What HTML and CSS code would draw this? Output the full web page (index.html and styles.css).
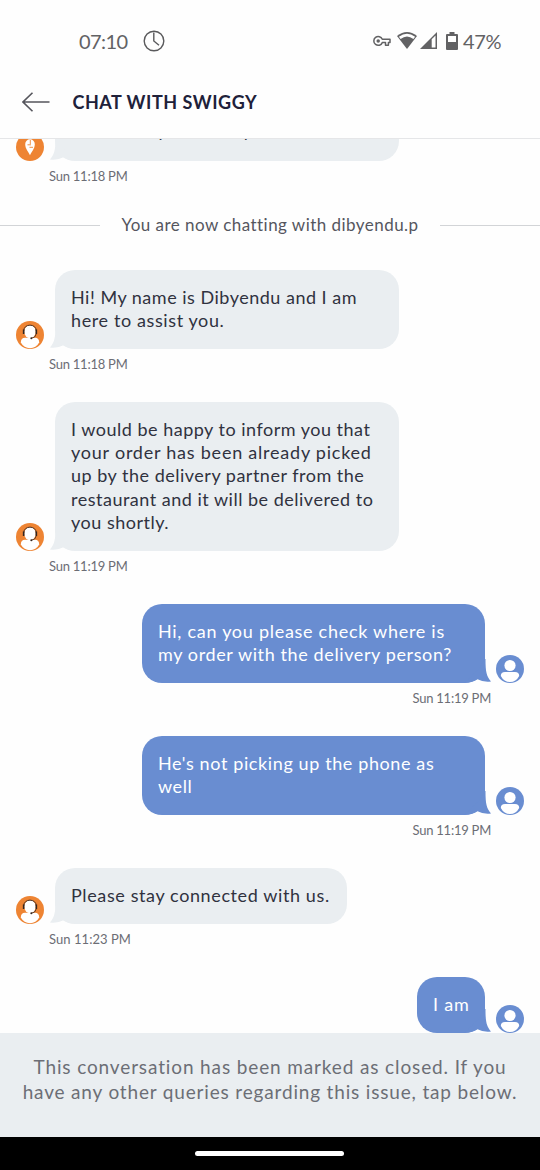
FILE: index.html
```html
<!DOCTYPE html>
<html lang="en">
<head>
<meta charset="utf-8">
<title>Chat with Swiggy</title>
<link rel="stylesheet" href="styles.css">
</head>
<body>
<svg class="defs" aria-hidden="true">
  <symbol id="agent" viewBox="0 0 28 28">
    <circle cx="14" cy="14" r="14" fill="#ee8433"/>
    <path d="M4.800 21.500Q4.800 16.800 9 16.800H19Q23.200 16.800 23.200 21.500Q20 27.200 14 27.200Q8 27.200 4.800 21.500z" fill="#fff"/>
    <ellipse cx="14" cy="10.600" rx="5.800" ry="6.600" fill="#fff"/>
    <path d="M7.700 12.500V10C7.700 2.200 20.300 2.200 20.300 10v2.500" fill="none" stroke="#4a2d1c" stroke-width="1"/>
    <path d="M7.600 8.500v4.500M20.400 8.500v4.500" stroke="#33251e" stroke-width="1.500"/>
    <path d="M20.200 13q-.7 3.800-4.700 4.200" fill="none" stroke="#4a2d1c" stroke-width=".9"/>
    <circle cx="15.300" cy="17.200" r="1" fill="#33251e"/>
  </symbol>
  <symbol id="user" viewBox="0 0 28 28">
    <circle cx="14" cy="14" r="14" fill="#698dd1"/>
    <circle cx="14" cy="10.500" r="5.600" fill="#fff"/>
    <path d="M4.800 21Q4.800 17 9 17H19Q23.200 17 23.200 21Q20 27 14 27Q8 27 4.800 21z" fill="#fff"/>
  </symbol>
  <symbol id="tail" viewBox="0 0 32 24">
    <path d="M5.500 0C5.500 13 4.500 17 0 22.500q8 .9 13.500-2.300 5 3.300 13 3.300L12 10 6.500 0z"/>
  </symbol>
</svg>
<div class="screen">
  <div class="status">
    <div class="status-left">
      <span class="clock-text">07:10</span>
      <svg width="22" height="22" viewBox="0 0 22 22" fill="none" stroke="#5a5a5c" stroke-width="1.400"><circle cx="11" cy="11" r="9.800"/><path d="M10.800 2.500V11l5.200 4.300"/></svg>
    </div>
    <div class="status-right">
      <svg class="key" width="18" height="12" viewBox="0 0 18 12" fill="none" stroke="#626264" stroke-width="1.500" stroke-linejoin="round"><path d="M9.300 4.300H17v3.300h-1.600v2.600h-2.900V7.600H9.300A4.400 4.400 0 1 1 9.300 4.300z"/><circle cx="5.200" cy="6" r="1" fill="#626264"/></svg>
      <svg class="wifi" width="20" height="17" viewBox="0 0 20 17"><path d="M0 4Q10-3.800 20 4L10 17z" fill="#626264"/><path d="M1.900 4.800Q10-1.200 18.100 4.800L16.400 7Q10 2 3.600 7z" fill="#fff"/></svg>
      <svg class="signal" width="17" height="17" viewBox="0 0 17 17"><path d="M0 17L17 0v17z" fill="#626264"/><path d="M11.700 7.300L15.500 3.500v12h-3.800z" fill="#fff"/></svg>
      <svg class="battery" width="12" height="18" viewBox="0 0 12 18"><path d="M3.500 0h5v2H11a1 1 0 0 1 1 1v14a1 1 0 0 1-1 1H1a1 1 0 0 1-1-1V3a1 1 0 0 1 1-1h2.500z" fill="#626264"/><path d="M2 4h8v6H2z" fill="#fff"/></svg>
      <span class="percent">47%</span>
    </div>
  </div>
  <header class="header">
    <svg width="28" height="20" viewBox="0 0 28 20" fill="none" stroke="#55555c" stroke-width="1.600"><path d="M27.500 10H1M10.500.700L1 10l9.500 9.300"/></svg>
    <h1>CHAT WITH SWIGGY</h1>
  </header>
  <main class="chat">
    <div class="thread">
      <section class="msg in">
        <div class="row">
          <svg class="avatar" viewBox="0 0 28 28"><circle cx="14" cy="14" r="14" fill="#ee8433"/><path d="M14 22.300c-1.400-3.500-4.800-6.500-4.800-11a4.800 5 0 0 1 9.600 0c0 4.500-3.400 7.500-4.800 11z" fill="#fff"/><path d="M14.300 7v4M11.500 11.800h3.500M13.500 14.300h3.500" fill="none" stroke="#ee8433" stroke-width=".9"/></svg>
          <div class="bubble wide scrolled"><svg class="tail"><use href="#tail"/></svg><p class="k6">will assist you shortly</p></div>
        </div>
        <time>Sun 11:18 PM</time>
      </section>
      <div class="divider"><span>You are now chatting with dibyendu.p</span></div>
      <section class="msg in">
        <div class="row">
          <svg class="avatar"><use href="#agent"/></svg>
          <div class="bubble wide"><svg class="tail"><use href="#tail"/></svg><p class="k5">Hi! My name is Dibyendu and I am</p><p class="k6">here to assist you.</p></div>
        </div>
        <time>Sun 11:18 PM</time>
      </section>
      <section class="msg in">
        <div class="row">
          <svg class="avatar"><use href="#agent"/></svg>
          <div class="bubble wide"><svg class="tail"><use href="#tail"/></svg><p class="k5">I would be happy to inform you that</p><p class="k8">your order has been already picked</p><p class="k5">up by the delivery partner from the</p><p class="k5">restaurant and it will be delivered to</p><p class="k5">you shortly.</p></div>
        </div>
        <time>Sun 11:19 PM</time>
      </section>
      <section class="msg out">
        <div class="row">
          <div class="bubble wide"><svg class="tail"><use href="#tail"/></svg><p class="k7">Hi, can you please check where is</p><p class="k6">my order with the delivery person?</p></div>
          <svg class="avatar"><use href="#user"/></svg>
        </div>
        <time>Sun 11:19 PM</time>
      </section>
      <section class="msg out">
        <div class="row">
          <div class="bubble wide"><svg class="tail"><use href="#tail"/></svg><p class="k6">He's not picking up the phone as</p><p class="k6">well</p></div>
          <svg class="avatar"><use href="#user"/></svg>
        </div>
        <time>Sun 11:19 PM</time>
      </section>
      <section class="msg in">
        <div class="row">
          <svg class="avatar"><use href="#agent"/></svg>
          <div class="bubble medium"><svg class="tail"><use href="#tail"/></svg><p class="k6">Please stay connected with us.</p></div>
        </div>
        <time class="loose">Sun 11:23 PM</time>
      </section>
      <section class="msg out">
        <div class="row">
          <div class="bubble small"><svg class="tail"><use href="#tail"/></svg><p class="k8">I am</p></div>
          <svg class="avatar"><use href="#user"/></svg>
        </div>
      </section>
    </div>
  </main>
  <footer class="closed">
    <p class="closed-first">This conversation has been marked as closed. If you</p>
    <p class="closed-second">have any other queries regarding this issue, tap below.</p>
  </footer>
  <div class="nav"><i class="pill"></i></div>
</div>
</body>
</html>
```
FILE: styles.css
```css
* { box-sizing: border-box; }
body { margin: 0; background: #fefefe; font-family: Lato, "Open Sans", sans-serif; }
p, h1 { margin: 0; }
svg { display: block; flex: none; }
.defs { display: none; }
.screen { width: 540px; height: 1170px; display: flex; flex-direction: column; overflow: hidden; }

.status { height: 68px; flex: none; padding: 13px 39px 0 79px; display: flex; justify-content: space-between; align-items: center; color: #626264; font-size: 20px; line-height: 24px; }
.status-left { display: flex; align-items: center; gap: 16px; }
.clock-text { width: 48px; letter-spacing: -.6px; white-space: nowrap; }
.status-right { display: flex; align-items: center; }
.key { margin-right: 6px; }
.wifi { margin-right: 3px; }
.signal { margin-right: 9px; }
.battery { margin-right: 5px; }
.percent { width: 38px; letter-spacing: -.4px; white-space: nowrap; }

.header { height: 71px; flex: none; padding: 0 22px 2px 22px; display: flex; align-items: center; gap: 22.500px; border-bottom: 1px solid #e5e6e8; }
h1 { font-size: 18px; line-height: 22px; font-weight: 700; letter-spacing: .52px; color: #20213a; white-space: nowrap; }

.chat { height: 894px; flex: none; overflow: hidden; display: flex; flex-direction: column; justify-content: flex-end; }
.thread { flex: none; }
.msg { padding: 0 16px; }
.row { display: flex; align-items: flex-end; gap: 11px; }
.out .row { justify-content: flex-end; }
.avatar { width: 28px; height: 28px; }
.bubble { position: relative; border-radius: 20px; padding: 15.900px 16px 16.500px; background: #eaeef1; color: #30323f; font-size: 18px; line-height: 23.250px; white-space: nowrap; }
.wide { width: 344px; }
.medium { width: 292px; }
.small { width: 68px; }
.scrolled { padding-bottom: 18.200px; }
.out .bubble { background: #698dd1; color: #fff; }
.out .wide { width: 343px; }
.tail { position: absolute; left: -5.500px; bottom: 0; width: 32px; height: 24px; fill: #eaeef1; }
.out .tail { left: auto; right: -5.500px; transform: scaleX(-1); fill: #698dd1; }
time { display: block; height: 53.350px; padding: 6px 33px 0; font-size: 13px; line-height: 18px; letter-spacing: -.24px; color: #6c6d75; }
.out time { text-align: right; }
time.loose { letter-spacing: .05px; }
.k5 { letter-spacing: .5px; }
.k6 { letter-spacing: .61px; }
.k7 { letter-spacing: .72px; }
.k8 { letter-spacing: .77px; }

.divider { height: 55.750px; display: flex; align-items: flex-start; justify-content: space-between; color: #55565e; font-size: 17px; line-height: 22px; letter-spacing: .46px; white-space: nowrap; }
.divider::before, .divider::after { content: ""; width: 100px; height: 1px; margin-top: 11px; background: #d2d4d7; }

.closed { height: 104px; flex: none; padding: 21px 0 0; background: #eaeef1; color: #6c6e76; font-size: 19px; line-height: 25px; text-align: center; white-space: nowrap; }
.closed-first { letter-spacing: .87px; }
.closed-second { letter-spacing: .83px; }
.nav { flex: 1; padding-right: 1px; background: #000; display: flex; justify-content: center; align-items: center; }
.pill { width: 149px; height: 5px; border-radius: 3px; background: #fff; }
```
